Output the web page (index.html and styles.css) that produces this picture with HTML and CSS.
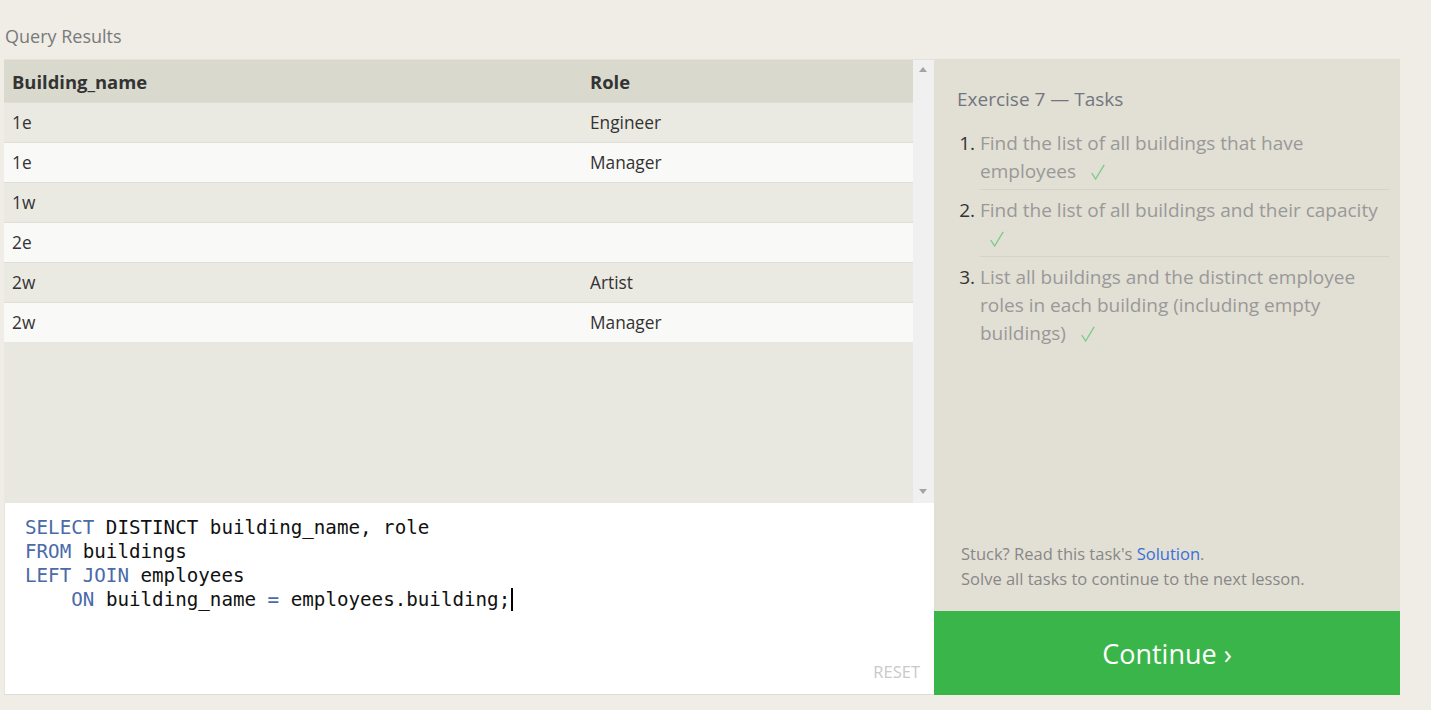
FILE: index.html
```html
<!DOCTYPE html>
<html>
<head>
<meta charset="utf-8">
<link rel="stylesheet" href="styles.css">
</head>
<body>
<div class="page">
  <div class="section-title">Query Results</div>
  <div class="workspace">
    <div class="left">
      <div class="results">
        <div class="table-wrap">
          <table class="results-table">
            <thead>
              <tr><th class="col-a">Building_name</th><th>Role</th></tr>
            </thead>
            <tbody>
              <tr><td>1e</td><td>Engineer</td></tr>
              <tr><td>1e</td><td>Manager</td></tr>
              <tr><td>1w</td><td></td></tr>
              <tr><td>2e</td><td></td></tr>
              <tr><td>2w</td><td>Artist</td></tr>
              <tr><td>2w</td><td>Manager</td></tr>
            </tbody>
          </table>
        </div>
        <div class="scrollbar">
          <span class="arrow up"></span>
          <span class="arrow down"></span>
        </div>
      </div>
      <div class="editor">
        <pre class="code"><span class="kw">SELECT</span> DISTINCT building_name, role
<span class="kw">FROM</span> buildings
<span class="kw">LEFT JOIN</span> employees
    <span class="kw">ON</span> building_name <span class="kw">=</span> employees.building;<span class="cursor"></span></pre>
        <div class="reset">RESET</div>
      </div>
    </div>
    <div class="right">
      <div class="tasks">
        <div class="tasks-title">Exercise 7 — Tasks</div>
        <ol class="task-list">
          <li>Find the list of all buildings that have employees <svg class="check" viewBox="0 0 14 16" width="14" height="16"><path d="M0.8 9.2 L4.6 15 L13.2 0.8" fill="none" stroke="#7ccb8b" stroke-width="1.3"/></svg></li>
          <li>Find the list of all buildings and their capacity <svg class="check" viewBox="0 0 14 16" width="14" height="16"><path d="M0.8 9.2 L4.6 15 L13.2 0.8" fill="none" stroke="#7ccb8b" stroke-width="1.3"/></svg></li>
          <li>List all buildings and the distinct employee roles in each building (including empty buildings) <svg class="check" viewBox="0 0 14 16" width="14" height="16"><path d="M0.8 9.2 L4.6 15 L13.2 0.8" fill="none" stroke="#7ccb8b" stroke-width="1.3"/></svg></li>
        </ol>
        <div class="note">
          <div>Stuck? Read this task's <a class="link" href="#">Solution</a>.</div>
          <div>Solve all tasks to continue to the next lesson.</div>
        </div>
      </div>
      <div class="continue">Continue ›</div>
    </div>
  </div>
</div>
</body>
</html>
```

FILE: styles.css
```css
html, body {
  margin: 0;
  padding: 0;
}
body {
  background: #efede6;
  font-family: "Open Sans", "Noto Sans", sans-serif;
  width: 1431px;
  height: 710px;
  overflow: hidden;
}
.page {
  padding: 24px 0 0 4px;
}
.section-title {
  font-size: 18px;
  line-height: 24px;
  color: #7a7a7a;
  padding-left: 1px;
  height: 35px;
}
.workspace {
  display: flex;
  width: 1396px;
}
.left {
  width: 930px;
  display: flex;
  flex-direction: column;
}
.results {
  height: 443px;
  display: flex;
  background: #e9e8e0;
  border-top: 1px solid #e4e2da;
}
.table-wrap {
  flex: 1;
}
.results-table {
  width: 100%;
  border-collapse: collapse;
}
.results-table th {
  background: #dad9cd;
  text-align: left;
  font-weight: 700;
  font-size: 18.4px;
  color: #333;
  height: 42px;
  padding: 0 8px;
}
.results-table .col-a {
  width: 562px;
}
.results-table td {
  font-size: 17.3px;
  color: #333;
  height: 39px;
  padding: 0 8px;
  border-top: 1px solid #e0ded6;
}
.results-table tbody tr:nth-child(odd) td {
  background: #eae9e2;
}
.results-table tbody tr:nth-child(even) td {
  background: #f9f9f7;
}
.scrollbar {
  width: 21px;
  background: #f0f0f0;
  position: relative;
}
.arrow {
  position: absolute;
  left: 6px;
  width: 0;
  height: 0;
  border-left: 4px solid transparent;
  border-right: 4px solid transparent;
}
.arrow.up {
  top: 7px;
  border-bottom: 5px solid #a3a3a3;
}
.arrow.down {
  bottom: 9px;
  border-top: 5px solid #a3a3a3;
}
.editor {
  background: #ffffff;
  border-left: 1px solid #e6e4dc;
  border-bottom: 1px solid #dedcd4;
  box-sizing: border-box;
  height: 192px;
  display: flex;
  flex-direction: column;
}
.code {
  margin: 0;
  padding: 13px 0 0 20px;
  font-family: "DejaVu Sans Mono", "Liberation Mono", monospace;
  font-size: 19.2px;
  line-height: 24px;
  color: #111;
  flex: 1;
}
.kw {
  color: #4a6aa8;
}
.cursor {
  display: inline-block;
  width: 2px;
  height: 23px;
  background: #000;
  vertical-align: -5px;
  margin-left: 1px;
}
.reset {
  align-self: flex-end;
  font-size: 16.5px;
  color: #c9c9c9;
  padding: 0 14px 11px 0;
}
.right {
  width: 466px;
  display: flex;
  flex-direction: column;
}
.tasks {
  flex: 1;
  background: #e2dfd4;
  padding: 27px 11px 20px 23px;
  display: flex;
  flex-direction: column;
}
.tasks-title {
  font-size: 19px;
  line-height: 26px;
  color: #727680;
}
.task-list {
  margin: 11px 0 0 0;
  padding-left: 23px;
  color: #999;
  font-size: 19px;
  line-height: 28px;
}
.task-list li {
  padding: 6px 0 4px 0;
  border-bottom: 1px solid #d5d2c7;
}
.task-list li:last-child {
  border-bottom: none;
}
.task-list li::marker {
  color: #333;
}
.check {
  display: inline-block;
  margin-left: 10px;
  vertical-align: -2px;
}
.note {
  margin-top: auto;
  padding-left: 4px;
  font-size: 16.5px;
  line-height: 25px;
  color: #888;
}
.link {
  color: #3a6fd8;
  text-decoration: none;
}
.continue {
  height: 84px;
  background: #3ab54a;
  color: #fff;
  font-size: 27px;
  display: flex;
  align-items: center;
  justify-content: center;
}
```
